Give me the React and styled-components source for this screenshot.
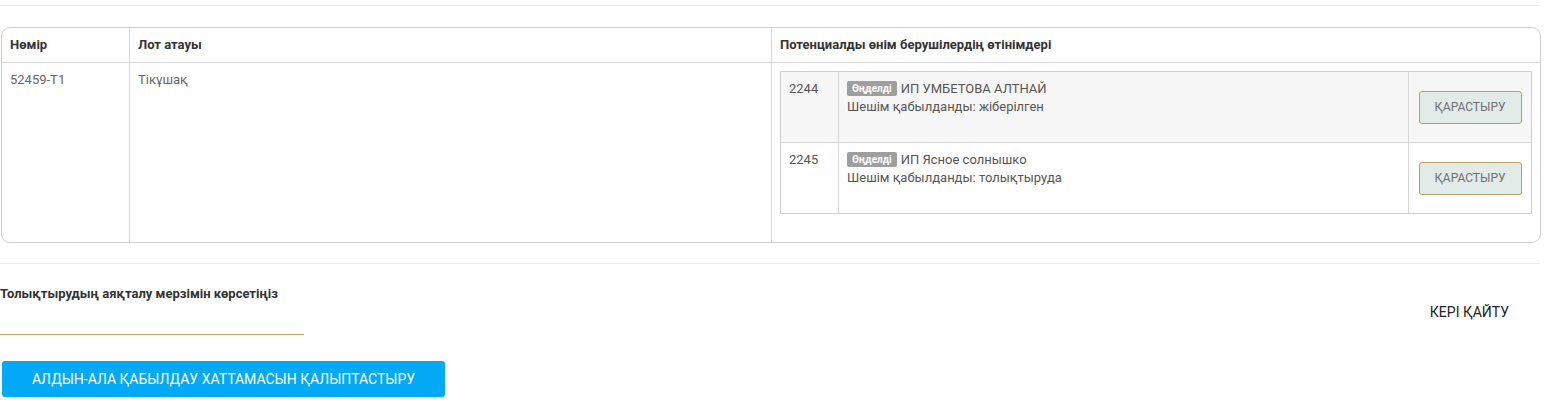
import styled, { createGlobalStyle } from "styled-components";

const Global = createGlobalStyle`
  body {
    margin: 0;
    background: #fff;
    font-family: Roboto, "Noto Sans", sans-serif;
    color: #555;
  }
  * { box-sizing: border-box; }
`;

const Page = styled.div`
  width: 1545px;
  padding: 5px 5px 0 0;
`;

const Rule = styled.div`
  height: 1px;
  background: #ececec;
  margin: ${(p) => p.$m || "0"};
`;

const Frame = styled.div`
  margin: 21px 0 0 1px;
  width: 1540px;
  border: 1px solid #cfcfcf;
  border-radius: 9px;
  overflow: hidden;
`;

const Row = styled.div`
  display: grid;
  grid-template-columns: 128px 642px 1fr;
  border-bottom: ${(p) => (p.$head ? "1px solid #d6d6d6" : "none")};
`;

const Cell = styled.div`
  padding: ${(p) => (p.$head ? "0 8px" : "8px")};
  height: ${(p) => (p.$head ? "34px" : "auto")};
  display: ${(p) => (p.$head ? "flex" : "block")};
  align-items: center;
  border-right: 1px solid #d6d6d6;
  font-size: 13px;
  line-height: 18px;
  font-weight: ${(p) => (p.$head ? 700 : 400)};
  color: ${(p) => (p.$head ? "#333" : "#666")};
  &:last-child { border-right: none; }
`;

const Inner = styled.div`
  border: 1px solid #cfcfcf;
  margin-bottom: 20px;
`;

const InnerRow = styled.div`
  display: grid;
  grid-template-columns: 58px 570px 1fr;
  height: ${(p) => (p.$first ? "70px" : "71px")};
  background: ${(p) => (p.$striped ? "#f7f7f7" : "#fff")};
  border-top: ${(p) => (p.$first ? "none" : "1px solid #d6d6d6")};
`;

const InnerCell = styled.div`
  padding: 8px;
  border-right: 1px solid #d6d6d6;
  font-size: 13px;
  line-height: 18px;
  color: #555;
  &:last-child { border-right: none; }
`;

const ActionCell = styled.div`
  display: flex;
  align-items: center;
  justify-content: center;
`;

const Badge = styled.span`
  display: inline-block;
  background: #9e9e9e;
  color: #fff;
  font-size: 10px;
  font-weight: 700;
  line-height: 15px;
  padding: 0 5px;
  border-radius: 2px;
  margin-right: 4px;
  vertical-align: 1px;
`;

const ViewButton = styled.button`
  width: 103px;
  height: 33px;
  background: #e3ebe8;
  border: 1px solid #b9a25f;
  border-radius: 3px;
  font-family: Roboto, sans-serif;
  font-size: 12px;
  color: #707070;
  text-transform: uppercase;
  padding: 0;
  cursor: pointer;
`;

const Bottom = styled.div`
  display: flex;
  justify-content: space-between;
  align-items: center;
  padding-top: 21px;
`;

const Field = styled.div`
  display: flex;
  flex-direction: column;
`;

const Label = styled.label`
  font-size: 13px;
  line-height: 18px;
  font-weight: 700;
  color: #333;
`;

const DateInput = styled.input`
  width: 304px;
  height: 31px;
  margin-top: 1px;
  border: none;
  border-bottom: 1px solid #bfa45e;
  outline: none;
  background: transparent;
`;

const BackButton = styled.button`
  background: none;
  border: none;
  font-family: Roboto, sans-serif;
  font-size: 14px;
  color: #222;
  text-transform: uppercase;
  padding: 8px 31px 8px 0;
  margin-top: 4px;
`;

const MainButton = styled.button`
  margin: 26px 0 0 2px;
  width: 443px;
  height: 36px;
  background: #03a9f4;
  border: none;
  border-radius: 3px;
  color: #fff;
  font-family: Roboto, sans-serif;
  font-size: 14px;
  text-transform: uppercase;
  cursor: pointer;
`;

const bids = [
  { id: "2244", name: "ИП УМБЕТОВА АЛТНАЙ", status: "жіберілген" },
  { id: "2245", name: "ИП Ясное солнышко", status: "толықтыруда" },
];

export default function App() {
  return (
    <Page>
      <Global />
      <Rule />
      <Frame>
        <Row $head>
          <Cell $head>Нөмір</Cell>
          <Cell $head>Лот атауы</Cell>
          <Cell $head>Потенциалды өнім берушілердің өтінімдері</Cell>
        </Row>
        <Row>
          <Cell>52459-Т1</Cell>
          <Cell>Тікұшақ</Cell>
          <Cell>
            <Inner>
              {bids.map((b, i) => (
                <InnerRow key={b.id} $first={i === 0} $striped={i === 0}>
                  <InnerCell>{b.id}</InnerCell>
                  <InnerCell>
                    <div>
                      <Badge>Өңделді</Badge>
                      {b.name}
                    </div>
                    <div>Шешім қабылданды: {b.status}</div>
                  </InnerCell>
                  <ActionCell>
                    <ViewButton>Қарастыру</ViewButton>
                  </ActionCell>
                </InnerRow>
              ))}
            </Inner>
          </Cell>
        </Row>
      </Frame>
      <Rule $m="20px 0 0" />
      <Bottom>
        <Field>
          <Label>Толықтырудың аяқталу мерзімін көрсетіңіз</Label>
          <DateInput type="text" />
        </Field>
        <BackButton>Кері қайту</BackButton>
      </Bottom>
      <MainButton>Алдын-ала қабылдау хаттамасын қалыптастыру</MainButton>
    </Page>
  );
}
